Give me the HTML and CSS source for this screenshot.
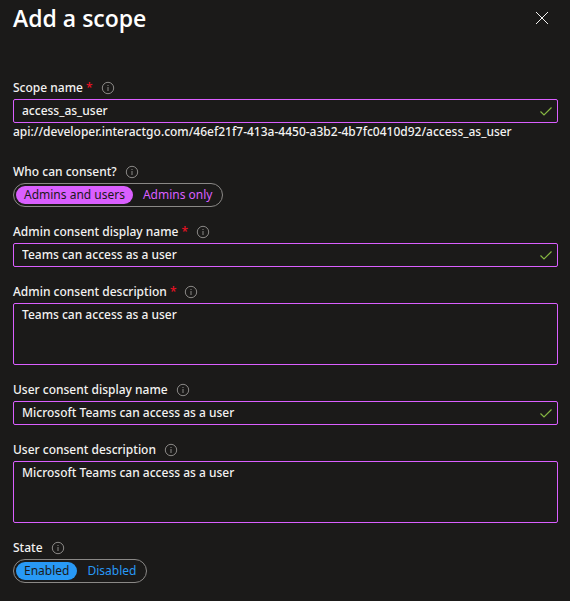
FILE: index.html
```html
<!DOCTYPE html>
<html lang="en">
<head>
    <meta charset="UTF-8" />
    <meta name="viewport" content="width=device-width, initial-scale=1.0" />
    <title>Add a scope</title>
    <link rel="stylesheet" href="styles.css">
</head>
<body>
    <svg class="sprite" aria-hidden="true">
        <symbol id="icon-info" viewBox="0 0 14 14">
            <circle cx="7" cy="7" r="5.7" fill="none" stroke="currentColor" />
            <path d="M7 6v4M7 4v1" fill="none" stroke="currentColor" />
        </symbol>
        <symbol id="icon-check" viewBox="0 0 14 14">
            <path d="M1.5 7.5l3.5 3.5 7.5-7.5" fill="none" stroke="currentColor" stroke-width="1.2" />
        </symbol>
    </svg>

    <form class="panel">
        <header class="panel-header">
            <h1>Add a scope</h1>
            <button type="button" class="close-button" aria-label="Close">
                <svg viewBox="0 0 14 14"><path d="M1 1l12 12M13 1L1 13" fill="none" stroke="currentColor" /></svg>
            </button>
        </header>

        <div class="field">
            <div class="field-label">
                <label for="scopeName">Scope name <span class="required">*</span></label>
                <svg class="info"><use href="#icon-info" /></svg>
            </div>
            <div class="text-box">
                <input type="text" id="scopeName" value="access_as_user" required>
                <svg class="check"><use href="#icon-check" /></svg>
            </div>
            <p class="scope-uri">api://developer.interactgo.com/46ef21f7-413a-4450-a3b2-4b7fc0410d92/access_as_user</p>
        </div>

        <div class="field" role="radiogroup" aria-labelledby="consentLabel">
            <div class="field-label">
                <span id="consentLabel">Who can consent?</span>
                <svg class="info"><use href="#icon-info" /></svg>
            </div>
            <div class="toggle toggle-consent">
                <input type="radio" name="consent" id="consentUsers" checked>
                <label for="consentUsers">Admins and users</label>
                <input type="radio" name="consent" id="consentAdmins">
                <label for="consentAdmins">Admins only</label>
            </div>
        </div>

        <div class="field">
            <div class="field-label">
                <label for="adminName">Admin consent display name <span class="required">*</span></label>
                <svg class="info"><use href="#icon-info" /></svg>
            </div>
            <div class="text-box">
                <input type="text" id="adminName" value="Teams can access as a user" required>
                <svg class="check"><use href="#icon-check" /></svg>
            </div>
        </div>

        <div class="field">
            <div class="field-label">
                <label for="adminDescription">Admin consent description <span class="required">*</span></label>
                <svg class="info"><use href="#icon-info" /></svg>
            </div>
            <textarea id="adminDescription" required>Teams can access as a user</textarea>
        </div>

        <div class="field">
            <div class="field-label">
                <label for="userName">User consent display name</label>
                <svg class="info"><use href="#icon-info" /></svg>
            </div>
            <div class="text-box">
                <input type="text" id="userName" value="Microsoft Teams can access as a user">
                <svg class="check"><use href="#icon-check" /></svg>
            </div>
        </div>

        <div class="field">
            <div class="field-label">
                <label for="userDescription">User consent description</label>
                <svg class="info"><use href="#icon-info" /></svg>
            </div>
            <textarea id="userDescription">Microsoft Teams can access as a user</textarea>
        </div>

        <div class="field" role="radiogroup" aria-labelledby="stateLabel">
            <div class="field-label">
                <span id="stateLabel">State</span>
                <svg class="info"><use href="#icon-info" /></svg>
            </div>
            <div class="toggle toggle-state">
                <input type="radio" name="state" id="stateEnabled" checked>
                <label for="stateEnabled">Enabled</label>
                <input type="radio" name="state" id="stateDisabled">
                <label for="stateDisabled">Disabled</label>
            </div>
        </div>
    </form>
</body>
</html>
```
FILE: styles.css
```css
:root {
    --panel-bg: #1b1a19;
    --text-color: #f3f2f1;
    --muted-color: #8a8886;
    --changed-color: #da5fff;
    --accent-color: #2899f5;
    --valid-color: #86b642;
    --required-color: #e81123;
}

* {
    margin: 0;
    padding: 0;
    box-sizing: border-box;
}

body {
    font-family: 'Segoe UI', 'Noto Sans', sans-serif;
    font-size: 12px;
    font-weight: 500;
    line-height: 18px;
    background-color: var(--panel-bg);
    color: var(--text-color);
}

.sprite {
    display: none;
}

.panel {
    display: flex;
    flex-direction: column;
    gap: 16px;
    padding: 0 12px 16px 13px;
}

.panel-header {
    display: flex;
    justify-content: space-between;
    align-items: center;
    height: 36px;
    margin-bottom: 27px;
}

h1 {
    color: white;
    font-family: 'Segoe UI', 'Open Sans', sans-serif;
    font-size: 23px;
    font-weight: 600;
}

.close-button {
    display: flex;
    padding: 9px;
    border: none;
    background: none;
    color: var(--text-color);
    cursor: pointer;
}

.close-button svg {
    width: 14px;
    height: 14px;
}

.field-label {
    display: flex;
    align-items: center;
    gap: 8px;
    height: 20px;
    padding-bottom: 3px;
}

.required {
    color: var(--required-color);
}

.info {
    width: 14px;
    height: 14px;
    color: var(--muted-color);
}

.text-box {
    display: flex;
    align-items: center;
    height: 24px;
    padding: 0 4px 0 8px;
    border: 1px solid var(--changed-color);
    border-radius: 2px;
}

.text-box input {
    flex: 1;
    min-width: 0;
    border: none;
    outline: none;
    background: none;
    color: inherit;
    font: inherit;
}

.check {
    width: 14px;
    height: 14px;
    color: var(--valid-color);
}

textarea {
    display: block;
    width: 100%;
    height: 62px;
    padding: 2px 8px;
    border: 1px solid var(--changed-color);
    border-radius: 2px;
    outline: none;
    resize: none;
    background: none;
    color: inherit;
    font: inherit;
}

.scope-uri {
    margin-bottom: 6px;
}

.toggle {
    display: inline-flex;
    height: 24px;
    padding: 2px;
    border: 1px solid var(--muted-color);
    border-radius: 12px;
    font-weight: 400;
    vertical-align: top;
}

.toggle-consent {
    --toggle-color: var(--changed-color);
}

.toggle-state {
    --toggle-color: var(--accent-color);
}

.toggle input {
    appearance: none;
}

.toggle label {
    padding: 0 8px;
    border-radius: 9px;
    color: var(--toggle-color);
    cursor: pointer;
}

.toggle label + input + label {
    margin-left: 2px;
}

.toggle input:checked + label {
    background-color: var(--toggle-color);
    color: var(--panel-bg);
}
```
